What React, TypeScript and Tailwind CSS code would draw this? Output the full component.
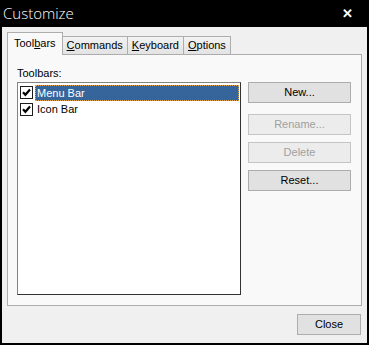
import React from "react";

const font = { fontFamily: '"Liberation Sans", Tahoma, sans-serif' };

function Check() {
  return (
    <div className="w-[13px] h-[13px] border border-[#1c1c1c] bg-white flex items-center justify-center shrink-0">
      <svg width="9" height="9" viewBox="0 0 9 9">
        <path d="M1 4.2 L3.4 6.8 L8 1.6" stroke="#000" strokeWidth="2.2" fill="none" />
      </svg>
    </div>
  );
}

function Btn({ label, disabled, extra }: { label: string; disabled?: boolean; extra?: string }) {
  return (
    <div
      className={`w-[103px] h-[21px] border flex items-center justify-center text-[11px] ${
        disabled ? "text-[#a0a0a0] border-[#c4c4c4] bg-[#ececec]" : "text-black border-[#adadad] bg-[#e1e1e1]"
      } ${extra ?? ""}`}
    >
      {label}
    </div>
  );
}

export default function App() {
  return (
    <div className="w-[369px] h-[345px] bg-black flex flex-col" style={font}>
      <div className="h-[27px] flex items-center justify-between pl-[3px] pr-[16px]">
        <span className="text-white text-[15px] font-light" style={{ fontFamily: '"Open Sans", sans-serif' }}>
          Customize
        </span>
        <span className="text-white text-[13px] font-bold">✕</span>
      </div>
      <div className="flex-1 mx-[2px] mb-[2px] bg-[#f0f0f0] flex flex-col pt-[6px] px-[5px]">
        <div className="flex items-end h-[22px] text-[11px] relative z-10 -mb-px">
          <div className="h-[23px] px-[6px] bg-[#f9f9f9] border border-b-0 border-[#adadad] flex items-center pb-px">
            Tool<u>b</u>ars
          </div>
          <div className="h-[19px] px-[4px] bg-gradient-to-b from-[#f2f2f2] to-[#e3e3e3] border border-l-0 border-[#adadad] flex items-center">
            <u>C</u>ommands
          </div>
          <div className="h-[19px] px-[4px] bg-gradient-to-b from-[#f2f2f2] to-[#e3e3e3] border border-l-0 border-[#adadad] flex items-center">
            <u>K</u>eyboard
          </div>
          <div className="h-[19px] px-[4px] bg-gradient-to-b from-[#f2f2f2] to-[#e3e3e3] border border-l-0 border-[#adadad] flex items-center">
            <u>O</u>ptions
          </div>
        </div>
        <div className="h-[252px] bg-[#f9f9f9] border border-[#adadad] flex pl-[9px] pt-[10px] gap-[7px]">
          <div className="flex flex-col">
            <div className="text-[11px] h-[16px] leading-[16px]">Toolbars:</div>
            <div className="w-[224px] h-[213px] mt-[1px] bg-white border border-[#333] border-t-[#828282] border-l-[#828282] p-[1px] text-[11px]">
              <div className="h-[17px] flex items-center gap-[2px] pl-[1px]">
                <Check />
                <div className="flex-1 h-[16px] bg-[#35659b] text-white border border-dotted border-[#e8a850] pl-[1px] leading-[14px]">
                  Menu Bar
                </div>
              </div>
              <div className="h-[16px] flex items-center gap-[2px] pl-[1px]">
                <Check />
                <div className="pl-[2px]">Icon Bar</div>
              </div>
            </div>
          </div>
          <div className="flex flex-col pt-[17px] gap-[7px]">
            <Btn label="New..." extra="mb-[4px]" />
            <Btn label="Rename..." disabled />
            <Btn label="Delete" disabled />
            <Btn label="Reset..." />
          </div>
        </div>
        <div className="flex justify-end pt-[8px] pr-[1px]">
          <div className="w-[64px] h-[21px] border border-[#adadad] bg-[#e1e1e1] flex items-center justify-center text-[11px]">
            Close
          </div>
        </div>
      </div>
    </div>
  );
}
